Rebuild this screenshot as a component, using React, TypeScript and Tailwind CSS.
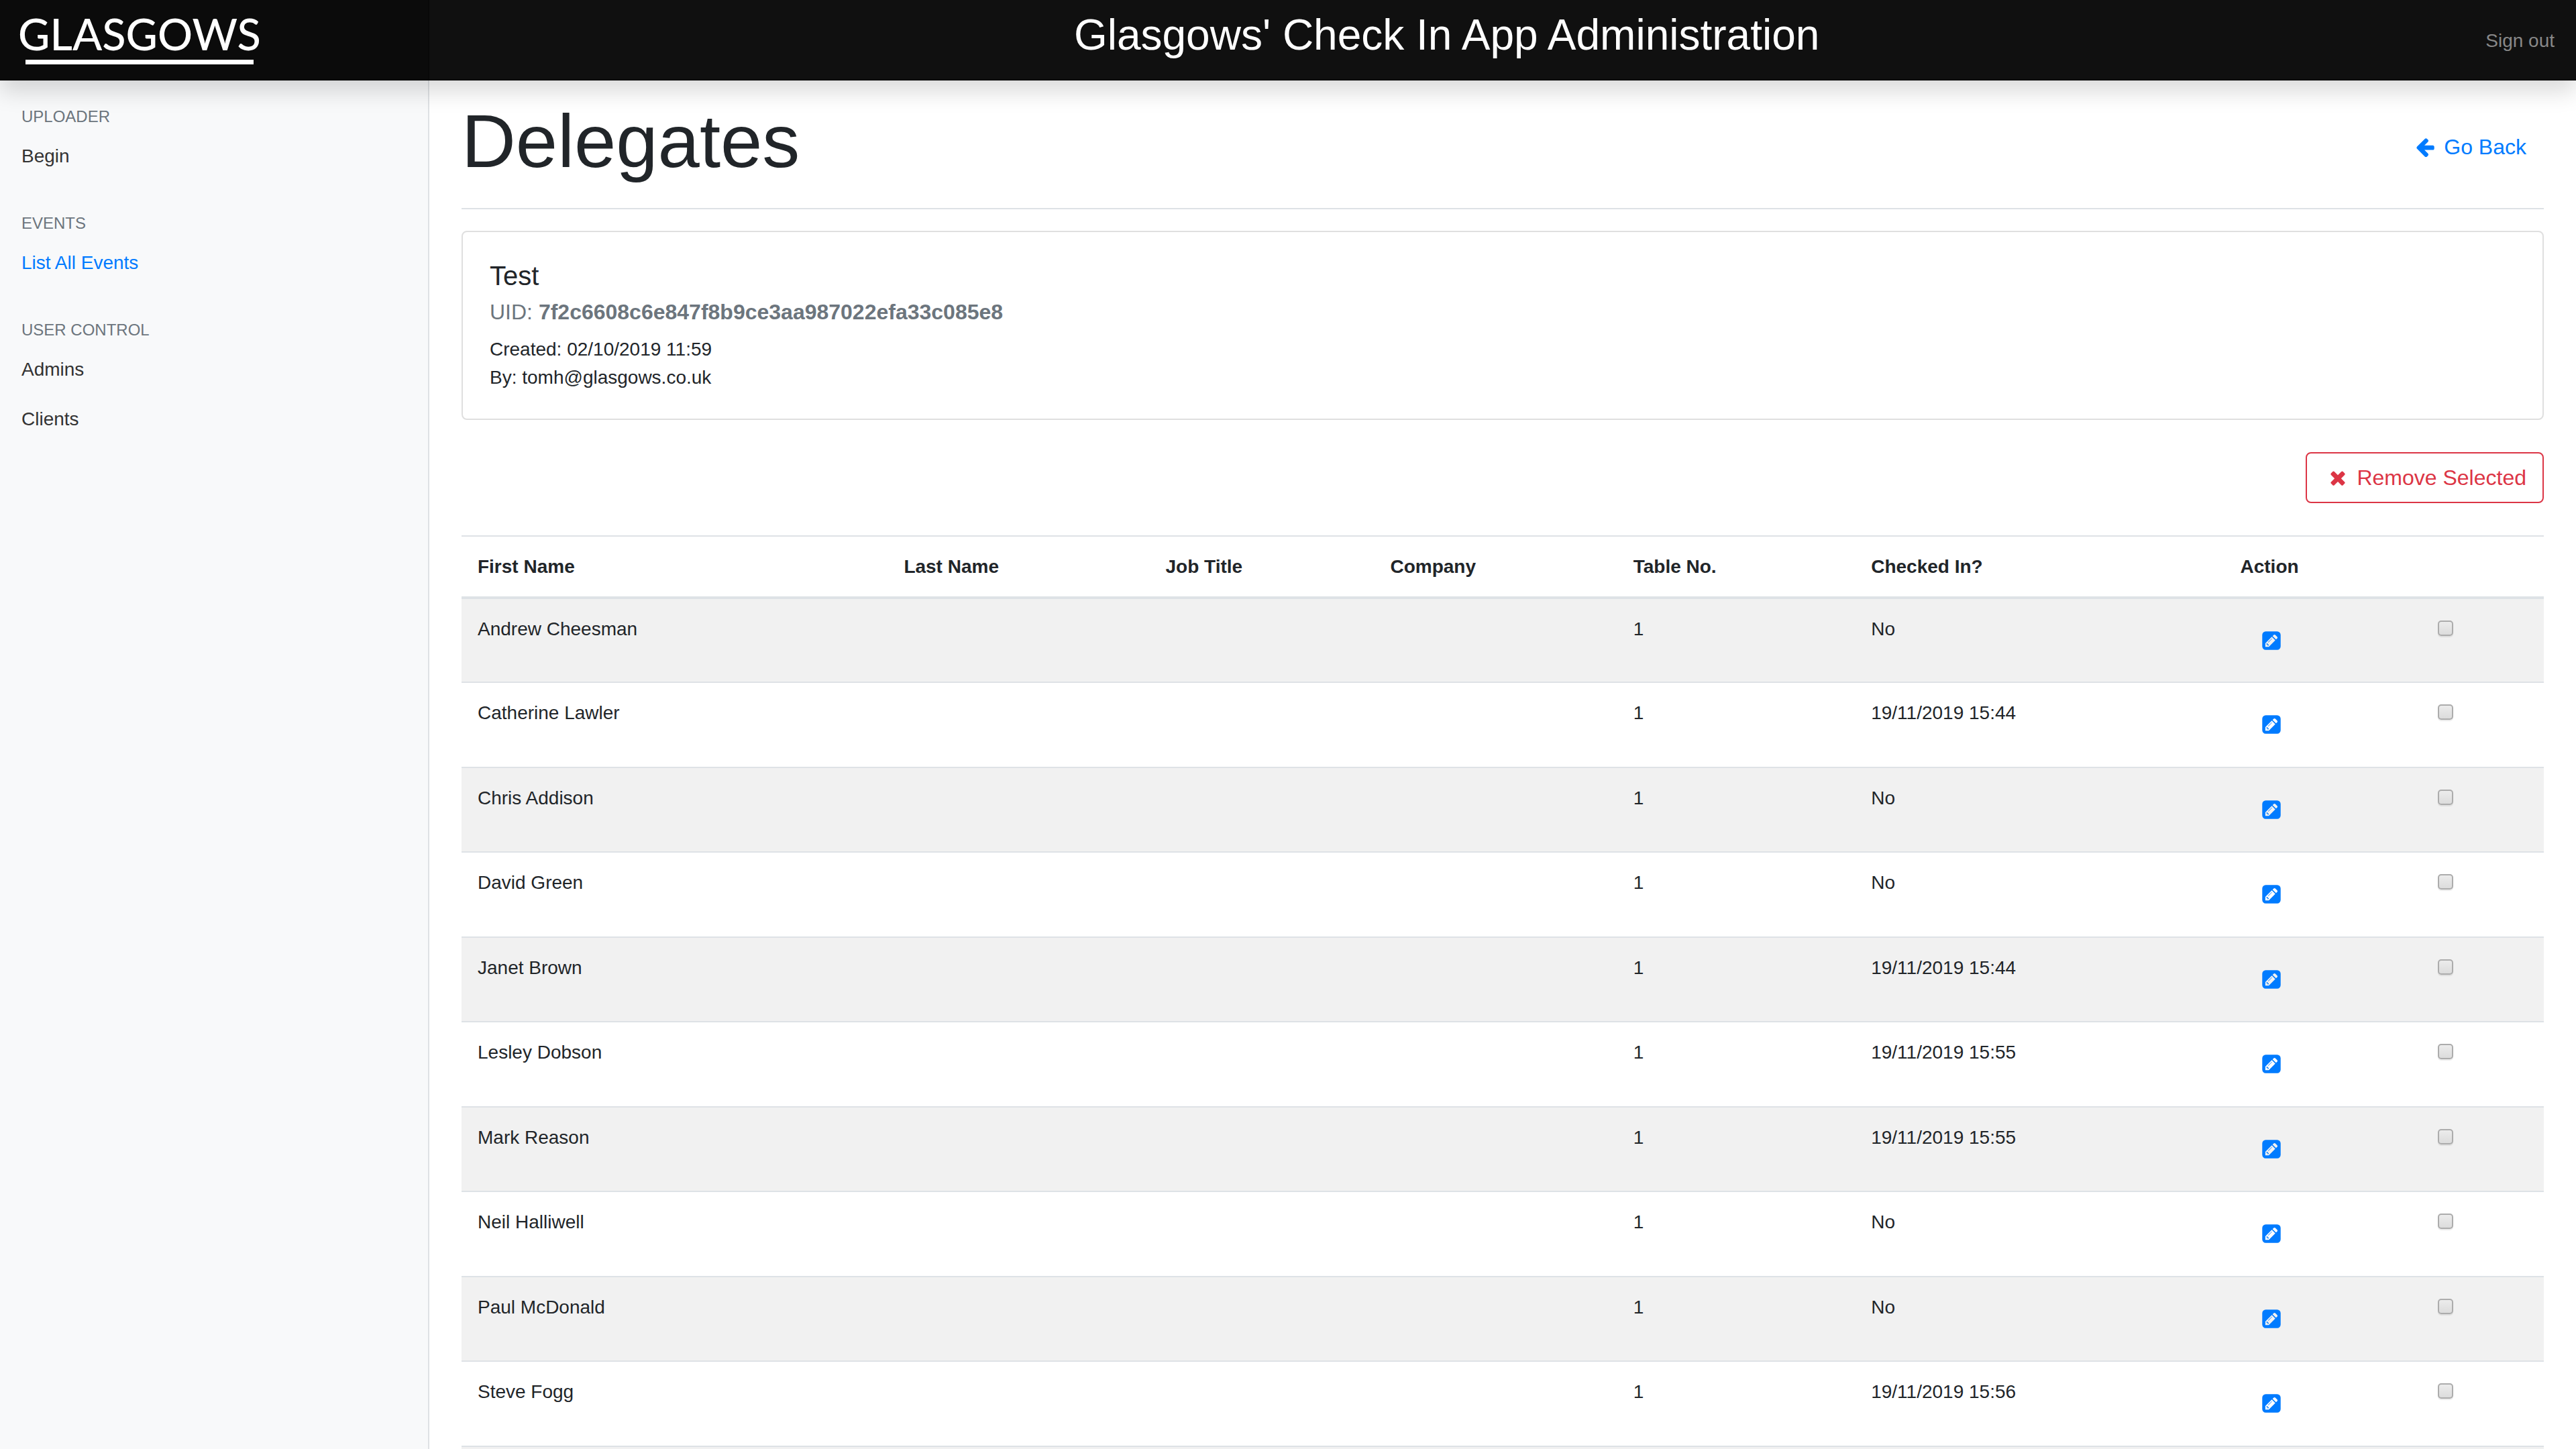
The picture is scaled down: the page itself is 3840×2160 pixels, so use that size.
const ICONS = {
  arrowLeft:
    "M1664 896v128q0 53-32.5 90.5t-84.5 37.5h-704l293 294q38 36 38 90t-38 90l-75 76q-37 37-90 37-52 0-91-37l-651-652q-37-37-37-90 0-52 37-91l651-650q38-38 91-38 52 0 90 38l75 74q38 38 38 91t-38 91l-293 293h704q52 0 84.5 37.5t32.5 90.5z",
  times:
    "M1490 1322q0 40-28 68l-136 136q-28 28-68 28t-68-28l-294-294-294 294q-28 28-68 28t-68-28l-136-136q-28-28-28-68t28-68l294-294-294-294q-28-28-28-68t28-68l136-136q28-28 68-28t68 28l294 294 294-294q28-28 68-28t68 28l136 136q28 28 28 68t-28 68l-294 294 294 294q28 28 28 68z",
  pencilSquare:
    "M404 980l152 152-52 52h-56v-96h-96v-56zm414-390q14 13-3 30l-291 291q-17 17-30 3-14-13 3-30l291-291q17-17 30-3zm-274 690l544-544-288-288-544 544v288h288zm608-608l92-92q28-28 28-68t-28-68l-152-152q-28-28-68-28t-68 28l-92 92zm384-384v960q0 119-84.5 203.5t-203.5 84.5h-960q-119 0-203.5-84.5t-84.5-203.5v-960q0-119 84.5-203.5t203.5-84.5h960q119 0 203.5 84.5t84.5 203.5z",
};

function Icon({ path, viewBox = "0 0 1792 1792" }: { path: string; viewBox?: string }) {
  return (
    <svg viewBox={viewBox} className="size-8 fill-current" aria-hidden="true">
      <path d={path} />
    </svg>
  );
}

const groups = [
  { title: "Uploader", links: [{ label: "Begin", active: false }] },
  { title: "Events", links: [{ label: "List All Events", active: true }] },
  {
    title: "User Control",
    links: [
      { label: "Admins", active: false },
      { label: "Clients", active: false },
    ],
  },
];

const delegates = [
  { name: "Andrew Cheesman", checkedIn: "No" },
  { name: "Catherine Lawler", checkedIn: "19/11/2019 15:44" },
  { name: "Chris Addison", checkedIn: "No" },
  { name: "David Green", checkedIn: "No" },
  { name: "Janet Brown", checkedIn: "19/11/2019 15:44" },
  { name: "Lesley Dobson", checkedIn: "19/11/2019 15:55" },
  { name: "Mark Reason", checkedIn: "19/11/2019 15:55" },
  { name: "Neil Halliwell", checkedIn: "No" },
  { name: "Paul McDonald", checkedIn: "No" },
  { name: "Steve Fogg", checkedIn: "19/11/2019 15:56" },
];

function Header() {
  return (
    <header className="relative z-10 flex h-[120px] items-stretch bg-[#101010] shadow-[0_16px_32px_rgba(0,0,0,0.15)]">
      <a href="#" className="flex w-1/6 flex-col items-start border-r-2 border-b-2 border-[#080808] bg-[#0b0b0b] pt-[15px] pl-[27px]">
        <span className="font-['Lato',sans-serif] text-[65px] leading-[70px] font-medium text-white">GLASGOWS</span>
        <span className="mt-1 ml-[11px] h-[7px] w-[340px] bg-white" />
      </a>
      <div className="flex flex-1 justify-center border-b-2 border-[#0c0c0c] pt-[14px]">
        <h2 className="text-[64px] leading-[77px] text-white">Glasgows&apos; Check In App Administration</h2>
      </div>
      <nav className="flex items-center border-b-2 border-[#0c0c0c] px-8 pt-1">
        <a href="#" className="text-[28px] leading-[42px] text-[#888888]">Sign out</a>
      </nav>
    </header>
  );
}

function Sidebar() {
  return (
    <nav className="w-1/6 border-r-2 border-[#dee1e4] bg-[#f8f9fa] pt-[39px]">
      {groups.map((g) => (
        <section key={g.title} className="mb-12">
          <h6 className="mb-2 px-8 text-2xl leading-[29px] text-[#6c757d] uppercase">{g.title}</h6>
          <ul>
            {g.links.map((l) => (
              <li key={l.label}>
                <a
                  href="#"
                  className={
                    l.active
                      ? "block px-8 py-4 text-[28px] leading-[42px] text-[#007bff]"
                      : "block px-8 py-4 text-[28px] leading-[42px] text-[#333333]"
                  }
                >
                  {l.label}
                </a>
              </li>
            ))}
          </ul>
        </section>
      ))}
    </nav>
  );
}

function DelegateTable() {
  return (
    <table className="mt-12 w-full table-fixed border-collapse text-left text-[28px] leading-[42px]">
      <colgroup>
        <col className="w-[20.47%]" />
        <col className="w-[12.57%]" />
        <col className="w-[10.79%]" />
        <col className="w-[11.67%]" />
        <col className="w-[11.42%]" />
        <col className="w-[17.73%]" />
        <col className="w-[9.5%]" />
        <col />
      </colgroup>
      <thead>
        <tr className="h-[92px] border-t-2 border-b-4 border-[#dee2e6]">
          <th className="px-6">First Name</th>
          <th className="px-6">Last Name</th>
          <th className="px-6">Job Title</th>
          <th className="px-6">Company</th>
          <th className="px-6">Table No.</th>
          <th className="px-6">Checked In?</th>
          <th className="px-6">Action</th>
          <td />
        </tr>
      </thead>
      <tbody>
        {delegates.map((d) => (
          <tr key={d.name} className="h-[126px] border-b-2 border-[#dee2e6] align-top odd:bg-[#f1f1f1] even:h-[127px]">
            <td className="px-6 pt-6">{d.name}</td>
            <td />
            <td />
            <td />
            <td className="px-6 pt-6">1</td>
            <td className="px-6 pt-6">{d.checkedIn}</td>
            <td className="px-6 pt-6">
              <a href="#" aria-label={"Edit " + d.name} className="mt-[22px] ml-[30px] flex w-fit text-[#007bff]">
                <Icon path={ICONS.pencilSquare} viewBox="-128 -128 1792 1792" />
              </a>
            </td>
            <td className="px-6 pt-8">
              <input
                type="checkbox"
                aria-label={"Select " + d.name}
                className="block size-[23px] appearance-none rounded-[5px] border-2 border-[#acacac] bg-linear-to-b from-[#ececec] to-[#dcdcdc] shadow-[0_2px_1px_rgba(0,0,0,0.08)]"
              />
            </td>
          </tr>
        ))}
        <tr className="h-[126px] odd:bg-[#f1f1f1]">
          <td colSpan={8} />
        </tr>
      </tbody>
    </table>
  );
}

export default function App() {
  return (
    <div className="flex h-screen flex-col overflow-hidden bg-white font-['Liberation_Sans',Arial,sans-serif] text-[#212529]">
      <Header />
      <div className="flex min-h-0 flex-1">
        <Sidebar />
        <main className="flex-1 px-12 pt-6">
          <div className="flex items-center justify-between border-b-2 border-[#dee2e6] pb-8">
            <h1 className="text-[112px] leading-[134px]">Delegates</h1>
            <a href="#" className="mt-4 flex items-center gap-3 px-[26px] text-[32px] leading-[48px] text-[#007bff]">
              <Icon path={ICONS.arrowLeft} />
              Go Back
            </a>
          </div>
          <section className="mt-8 rounded-lg border-2 border-[#dfdfdf] p-10">
            <h5 className="text-[40px] leading-[50px]">Test</h5>
            <h6 className="mt-[10px] mb-4 text-[32px] leading-[38px] text-[#6c757d]">
              UID: <b>7f2c6608c6e847f8b9ce3aa987022efa33c085e8</b>
            </h6>
            <p className="text-[28px] leading-[42px]">
              Created: 02/10/2019 11:59
              <br />
              By: tomh@glasgows.co.uk
            </p>
          </section>
          <div className="mt-12 flex justify-end">
            <button
              type="button"
              className="flex items-center gap-3 rounded-lg border-2 border-[#dc3545] py-3 pr-6 pl-[30px] text-[32px] leading-[48px] text-[#dc3545]"
            >
              <Icon path={ICONS.times} />
              Remove Selected
            </button>
          </div>
          <DelegateTable />
        </main>
      </div>
    </div>
  );
}
